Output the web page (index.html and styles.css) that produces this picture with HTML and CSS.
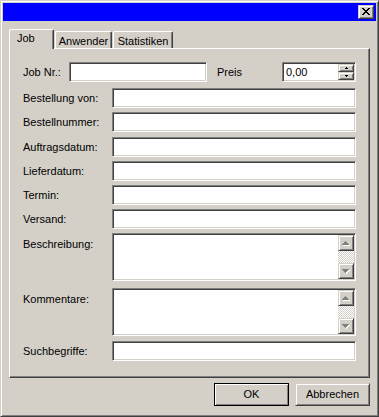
FILE: index.html
```html
<!DOCTYPE html>
<html lang="de">
<head>
<meta charset="utf-8">
<title>Job</title>
<link rel="stylesheet" href="styles.css">
</head>
<body>
<div class="window">
  <div class="titlebar">
    <button class="close" type="button" aria-label="Schließen">
      <svg width="8" height="7" viewBox="0 0 8 7" shape-rendering="crispEdges"><path fill="#000" d="M0 0h2v1H0z M6 0h2v1H6z M1 1h2v1H1z M5 1h2v1H5z M2 2h4v1H2z M3 3h2v1H3z M2 4h4v1H2z M1 5h2v1H1z M5 5h2v1H5z M0 6h2v1H0z M6 6h2v1H6z"/></svg>
    </button>
  </div>
  <div class="content">
    <div class="tabs">
      <div class="tab active">Job</div>
      <div class="tab tab-anw">Anwender</div>
      <div class="tab tab-stat">Statistiken</div>
    </div>
    <div class="panel">
      <div class="form">
        <div class="row">
          <label class="lbl lbl-job">Job Nr.:</label>
          <input class="field field-job" type="text">
          <label class="lbl lbl-preis">Preis</label>
          <div class="spin">
            <input class="spin-val" type="text" value="0,00">
            <div class="spin-btns">
              <div class="sbtn"><svg width="3" height="2" viewBox="0 0 3 2" shape-rendering="crispEdges"><path fill="#000" d="M1 0h1v1H1z M0 1h3v1H0z"/></svg></div>
              <div class="sbtn"><svg width="3" height="2" viewBox="0 0 3 2" shape-rendering="crispEdges"><path fill="#000" d="M0 0h3v1H0z M1 1h1v1H1z"/></svg></div>
            </div>
          </div>
        </div>
        <div class="row gap6">
          <label class="lbl">Bestellung von:</label>
          <input class="field" type="text">
        </div>
        <div class="row">
          <label class="lbl">Bestellnummer:</label>
          <input class="field" type="text">
        </div>
        <div class="row gap5">
          <label class="lbl">Auftragsdatum:</label>
          <input class="field" type="text">
        </div>
        <div class="row">
          <label class="lbl">Lieferdatum:</label>
          <input class="field" type="text">
        </div>
        <div class="row">
          <label class="lbl">Termin:</label>
          <input class="field" type="text">
        </div>
        <div class="row">
          <label class="lbl">Versand:</label>
          <input class="field" type="text">
        </div>
        <div class="row tall">
          <label class="lbl">Beschreibung:</label>
          <div class="memo">
            <div class="memo-text"></div>
            <div class="scrollbar">
              <div class="scbtn"><svg width="8" height="5" viewBox="0 0 8 5" shape-rendering="crispEdges"><path fill="#fff" d="M4 1h1v1H4z M3 2h3v1H3z M2 3h5v1H2z M1 4h7v1H1z"/><path fill="#808080" d="M3 0h1v1H3z M2 1h3v1H2z M1 2h5v1H1z M0 3h7v1H0z"/></svg></div>
              <div class="track"></div>
              <div class="scbtn"><svg width="8" height="5" viewBox="0 0 8 5" shape-rendering="crispEdges"><path fill="#fff" d="M1 1h7v1H1z M2 2h5v1H2z M3 3h3v1H3z M4 4h1v1H4z"/><path fill="#808080" d="M0 0h7v1H0z M1 1h5v1H1z M2 2h3v1H2z M3 3h1v1H3z"/></svg></div>
            </div>
          </div>
        </div>
        <div class="row tall gap7">
          <label class="lbl">Kommentare:</label>
          <div class="memo">
            <div class="memo-text"></div>
            <div class="scrollbar">
              <div class="scbtn"><svg width="8" height="5" viewBox="0 0 8 5" shape-rendering="crispEdges"><path fill="#fff" d="M4 1h1v1H4z M3 2h3v1H3z M2 3h5v1H2z M1 4h7v1H1z"/><path fill="#808080" d="M3 0h1v1H3z M2 1h3v1H2z M1 2h5v1H1z M0 3h7v1H0z"/></svg></div>
              <div class="track"></div>
              <div class="scbtn"><svg width="8" height="5" viewBox="0 0 8 5" shape-rendering="crispEdges"><path fill="#fff" d="M1 1h7v1H1z M2 2h5v1H2z M3 3h3v1H3z M4 4h1v1H4z"/><path fill="#808080" d="M0 0h7v1H0z M1 1h5v1H1z M2 2h3v1H2z M3 3h1v1H3z"/></svg></div>
            </div>
          </div>
        </div>
        <div class="row gap5">
          <label class="lbl">Suchbegriffe:</label>
          <input class="field" type="text">
        </div>
      </div>
    </div>
    <div class="buttons">
      <button class="btn default" type="button">OK</button>
      <button class="btn" type="button">Abbrechen</button>
    </div>
  </div>
</div>
</body>
</html>
```

FILE: styles.css
```css
* { box-sizing: border-box; }

html, body {
  margin: 0;
  padding: 0;
  background: #d4d0c8;
}

body {
  width: 379px;
  height: 417px;
  overflow: hidden;
  font-family: "Liberation Sans", Arial, sans-serif;
  font-size: 11px;
  line-height: 13px;
  color: #000;
}

.window {
  width: 379px;
  height: 417px;
  background: #d4d0c8;
  border: 1px solid;
  border-color: #d4d0c8 #404040 #404040 #d4d0c8;
  box-shadow: inset 1px 1px #fff, inset -1px -1px #808080;
  padding: 2px;
  display: flex;
  flex-direction: column;
}

.titlebar {
  height: 18px;
  background: #0000ff;
  display: flex;
  justify-content: flex-end;
  align-items: center;
  padding-right: 2px;
}

.close {
  width: 16px;
  height: 14px;
  padding: 0 0 1px 0;
  margin: 0;
  background: #d4d0c8;
  border: 1px solid;
  border-color: #d4d0c8 #404040 #404040 #d4d0c8;
  box-shadow: inset 1px 1px #fff, inset -1px -1px #808080;
  display: flex;
  justify-content: center;
  align-items: center;
}

.close svg { display: block; }

.content {
  flex: 1;
  padding: 8px 6px 8px 6px;
  display: flex;
  flex-direction: column;
}

.tabs {
  height: 19px;
  display: flex;
  align-items: flex-end;
}

.tab {
  height: 17px;
  background: #d4d0c8;
  border-top: 1px solid #fff;
  border-left: 1px solid #fff;
  border-right: 1px solid #404040;
  border-radius: 2px 2px 0 0;
  box-shadow: inset -1px 0 #808080;
  padding-top: 3px;
  text-align: center;
  white-space: nowrap;
  margin-left: 1px;
}

.tab.active {
  width: 45px;
  height: 20px;
  margin-left: 0;
  margin-bottom: -1px;
  padding-top: 2px;
  padding-left: 7px;
  text-align: left;
  position: relative;
  z-index: 1;
}

.tab-anw { width: 57px; }
.tab-stat { width: 60px; }

.panel {
  width: 361px;
  height: 330px;
  border: 1px solid;
  border-color: #fff #404040 #404040 #fff;
  box-shadow: inset -1px -1px #808080;
  padding: 13px 13px 0 13px;
}

.form {
  display: flex;
  flex-direction: column;
  gap: 4px;
}

.row {
  height: 20px;
  display: flex;
  align-items: center;
}

.row.gap5 { margin-top: 1px; }
.row.gap6 { margin-top: 2px; }
.row.gap7 { margin-top: 3px; }

.row.tall {
  height: 48px;
  align-items: flex-start;
}

.row.tall .lbl { padding-top: 5px; }

.lbl {
  width: 89px;
  flex: none;
  white-space: nowrap;
}

.lbl-job { width: 46px; }
.lbl-preis { width: 65px; margin-left: 10px; }

.field {
  flex: 1;
  min-width: 0;
  height: 20px;
  margin: 0;
  padding: 0 2px;
  font: inherit;
  color: #000;
  background: #fff;
  border: 1px solid;
  border-color: #808080 #fff #fff #808080;
  box-shadow: inset 1px 1px #404040, inset -1px -1px #d4d0c8;
  outline: none;
  -webkit-appearance: none;
  appearance: none;
  border-radius: 0;
}

.field-job {
  flex: none;
  width: 138px;
}

.spin {
  width: 74px;
  height: 20px;
  flex: none;
  background: #fff;
  border: 1px solid;
  border-color: #808080 #fff #fff #808080;
  box-shadow: inset 1px 1px #404040, inset -1px -1px #d4d0c8;
  padding: 1px;
  display: flex;
}

.spin-val {
  flex: 1;
  min-width: 0;
  border: none;
  margin: 0;
  padding: 0 0 0 2px;
  font: inherit;
  color: #000;
  background: transparent;
  outline: none;
}

.spin-btns {
  width: 16px;
  display: flex;
  flex-direction: column;
}

.sbtn {
  height: 8px;
  background: #d4d0c8;
  border: 1px solid;
  border-color: #d4d0c8 #404040 #404040 #d4d0c8;
  box-shadow: inset 1px 1px #fff, inset -1px -1px #808080;
  display: flex;
  justify-content: center;
  align-items: center;
}

.sbtn svg, .scbtn svg { display: block; }

.memo {
  flex: 1;
  height: 48px;
  background: #fff;
  border: 1px solid;
  border-color: #808080 #fff #fff #808080;
  box-shadow: inset 1px 1px #404040, inset -1px -1px #d4d0c8;
  padding: 1px;
  display: flex;
}

.memo-text { flex: 1; }

.scrollbar {
  width: 16px;
  display: flex;
  flex-direction: column;
}

.scbtn {
  width: 16px;
  height: 16px;
  flex: none;
  background: #d4d0c8;
  border: 1px solid;
  border-color: #d4d0c8 #404040 #404040 #d4d0c8;
  box-shadow: inset 1px 1px #fff, inset -1px -1px #808080;
  display: flex;
  justify-content: center;
  align-items: center;
}

.track {
  flex: 1;
  background: repeating-conic-gradient(#fff 0 25%, #d4d0c8 0 50%) 0 0 / 2px 2px;
}

.buttons {
  margin-top: 5px;
  display: flex;
  justify-content: flex-end;
  gap: 6px;
}

.btn {
  width: 75px;
  height: 23px;
  margin: 0;
  padding: 0;
  font: inherit;
  color: #000;
  background: #d4d0c8;
  border: 1px solid;
  border-color: #d4d0c8 #404040 #404040 #d4d0c8;
  box-shadow: inset 1px 1px #fff, inset -1px -1px #808080;
  border-radius: 0;
}

.btn.default {
  border-color: #000;
  box-shadow: inset 1px 1px #fff, inset -1px -1px #808080;
}
```
